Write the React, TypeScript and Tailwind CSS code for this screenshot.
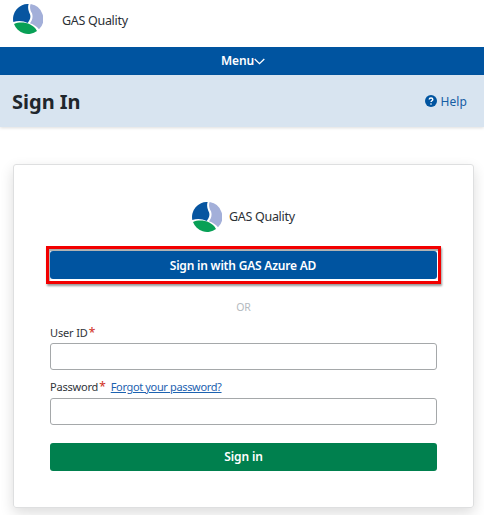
import { clsx } from "clsx";

function Logo() {
  return (
    <svg viewBox="0 0 90 90" className="size-[30px] shrink-0" aria-hidden="true">
      <path d="M47 0A45 45 0 0 0 1 54C16 49 32 51 44 57C48 50 55 43 51 31C47 22 43 11 47 0Z" fill="#0755a0" />
      <path d="M53 0A45 45 0 0 1 78 76C71 68 62 62 51 58C57 50 61 40 57 28C52 19 49 10 53 0Z" fill="#a3afd9" />
      <path d="M3 60C25 51 58 56 72 81A45 45 0 0 1 3 60Z" fill="#08a056" />
    </svg>
  );
}

function Label({ text, className }: { text: string; className?: string }) {
  return (
    <span className={clsx("whitespace-nowrap text-[11px] leading-4 text-[#30343a]", className)}>
      {text}
    </span>
  );
}

function Required() {
  return <span className="ml-px text-[12px] font-medium leading-4 text-[#d33b2f]">*</span>;
}

export default function App() {
  return (
    <div className="h-[515px] w-full overflow-hidden bg-white font-['Noto_Sans',sans-serif] text-[#2b3036]">
      <header className="flex h-[47px] items-start pl-[13px] pt-1">
        <Logo />
        <span className="ml-[19px] mt-[7px] text-[12.5px] leading-5 tracking-[-0.3px]">GAS Quality</span>
      </header>

      <button className="flex h-7 w-full items-center bg-[#0054a0] pl-[221px] text-[12px] font-semibold tracking-[-0.1px] text-white">
        Menu
        <svg viewBox="0 0 11 7" className="h-[7px] w-[11px]" fill="none" stroke="currentColor" strokeWidth="1.3">
          <path d="M.7 1 5.5 5.7 10.3 1" />
        </svg>
      </button>

      <div className="flex h-[52px] items-center justify-between bg-[#d8e4f0] pl-3 pr-[17px] shadow-[0_1px_3px_#0002]">
        <h1 className="pt-px text-[20px] font-bold text-[#20262c]">Sign In</h1>
        <a href="#" className="flex items-center gap-[3px] text-[12px] tracking-[0.1px] text-[#165da4]">
          <svg viewBox="0 0 12 12" className="size-3">
            <circle cx="6" cy="6" r="6" fill="#0054a0" />
            <path d="M4.2 4.5C4.3 2.5 7.8 2.5 7.8 4.5C7.8 5.8 6 5.7 6 7.1" fill="none" stroke="#fff" strokeWidth="1.4" />
            <circle cx="6" cy="9" r=".8" fill="#fff" />
          </svg>
          <span className="pt-0.5">Help</span>
        </a>
      </div>

      <main className="ml-[13px] mt-[37px] flex h-[344px] w-[461px] flex-col rounded-[3px] border border-[#dedfe0] px-9 pt-[37px] shadow-[0_5px_14px_#00000024]">
        <div className="ml-[142px] flex h-[30px] items-center">
          <Logo />
          <span className="ml-[7px] pt-px text-[12.5px] tracking-[-0.3px]">GAS Quality</span>
        </div>

        <div className="-ml-[4px] mt-[14px] h-[38px] w-[395px] shrink-0 border-[3px] border-[#f20000] px-px py-[2px] shadow-[1px_2px_2px_#0006,inset_1px_2px_1px_#0005]">
          <button className="flex h-7 w-full items-center justify-center rounded-[3px] bg-[#0054a0] pt-px pr-px text-[12px] font-semibold tracking-[-0.2px] text-white">
            Sign in with GAS Azure AD
          </button>
        </div>

        <div className="mt-[15px] h-4 text-center text-[10.5px] leading-4 text-[#b4bac0]">OR</div>

        <form className="flex w-[387px] flex-col" onSubmit={(e) => e.preventDefault()}>
          <label className="mt-[10px] flex h-4">
            <Label text="User ID" className="tracking-[-0.15px]" />
            <Required />
          </label>
          <input aria-label="User ID" className="mt-[2px] h-[27px] rounded-[3px] border border-[#a5a8aa] px-2 text-xs" />
          <div className="mt-[9px] flex h-4">
            <Label text="Password" className="tracking-[-0.2px]" />
            <Required />
            <a href="#" className="ml-[5px] whitespace-nowrap text-[11px] leading-4 tracking-[-0.35px] text-[#1c62b0] underline">
              Forgot your password?
            </a>
          </div>
          <input type="password" aria-label="Password" className="mt-[3px] h-[27px] rounded-[3px] border border-[#a5a8aa] px-2 text-xs" />
          <button className="mt-[18px] h-7 rounded-[3px] bg-[#00804e] text-[12px] font-semibold tracking-[-0.1px] text-white">Sign in</button>
        </form>
      </main>
    </div>
  );
}
